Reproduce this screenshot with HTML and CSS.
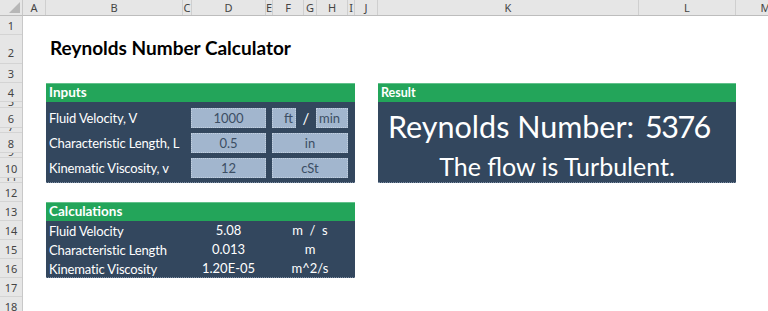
FILE: index.html
```html
<!DOCTYPE html>
<html lang="en">
<head>
  <meta charset="UTF-8">
  <title>Reynolds Number Calculator</title>
  <link rel="stylesheet" href="styles.css">
</head>
<body>
  <div class="sheet">
    <div class="corner"></div>

    <div class="col-heads">
      <div class="ch w-a">A</div>
      <div class="ch w-b">B</div>
      <div class="ch w-c">C</div>
      <div class="ch w-d">D</div>
      <div class="ch w-e">E</div>
      <div class="ch w-f">F</div>
      <div class="ch w-g">G</div>
      <div class="ch w-h">H</div>
      <div class="ch w-i">I</div>
      <div class="ch w-j">J</div>
      <div class="ch w-k">K</div>
      <div class="ch w-l">L</div>
      <div class="ch w-m">M</div>
    </div>

    <div class="row-heads">
      <div class="rh h-19">1</div>
      <div class="rh h-29">2</div>
      <div class="rh h-19">3</div>
      <div class="rh h-19">4</div>
      <div class="rh h-6">5</div>
      <div class="rh h-20">6</div>
      <div class="rh h-5">7</div>
      <div class="rh h-20">8</div>
      <div class="rh h-5">9</div>
      <div class="rh h-20">10</div>
      <div class="rh h-5">11</div>
      <div class="rh h-19">12</div>
      <div class="rh h-19">13</div>
      <div class="rh h-19">14</div>
      <div class="rh h-19">15</div>
      <div class="rh h-19">16</div>
      <div class="rh h-19">17</div>
      <div class="rh h-19">18</div>
    </div>

    <div class="grid-body">
      <div class="title-row">
        <h1>Reynolds Number Calculator</h1>
      </div>

      <div class="panels">
        <section class="panel inputs">
          <div class="panel-head">Inputs</div>
          <div class="input-grid">
            <div class="label">Fluid Velocity, V</div>
            <div class="box">1000</div>
            <div class="unit-split">
              <div class="box box-ft">ft</div>
              <div class="slash">/</div>
              <div class="box box-min">min</div>
            </div>

            <div class="label">Characteristic Length, L</div>
            <div class="box">0.5</div>
            <div class="box">in</div>

            <div class="label">Kinematic Viscosity, v</div>
            <div class="box">12</div>
            <div class="box">cSt</div>
          </div>
        </section>

        <section class="panel result">
          <div class="panel-head small">Result</div>
          <div class="result-body">
            <div class="re-line">
              <span class="re-label">Reynolds Number:</span>
              <span class="re-value">5376</span>
            </div>
            <div class="flow-line">The flow is Turbulent.</div>
          </div>
        </section>
      </div>

      <section class="panel calcs">
        <div class="panel-head">Calculations</div>
        <div class="calc-grid">
          <div class="label">Fluid Velocity</div>
          <div class="val">5.08</div>
          <div class="unit">m&nbsp; /&nbsp; s</div>

          <div class="label">Characteristic Length</div>
          <div class="val">0.013</div>
          <div class="unit">m</div>

          <div class="label">Kinematic Viscosity</div>
          <div class="val">1.20E-05</div>
          <div class="unit">m^2/s</div>
        </div>
      </section>
    </div>
  </div>
</body>
</html>
```

FILE: styles.css
```css
body {
  margin: 0;
  background: #fff;
  font-family: Lato, "Liberation Sans", sans-serif;
  overflow: hidden;
}

.sheet {
  display: grid;
  grid-template-columns: 23px 1fr;
  grid-template-rows: 16px 1fr;
  width: 768px;
  height: 311px;
}

/* headers */
.corner {
  background: #e6e6e6;
  border-right: 1px solid #c8c8c8;
  border-bottom: 1px solid #bdbdbd;
  box-sizing: border-box;
  position: relative;
}

.corner::after {
  content: "";
  position: absolute;
  right: 2px;
  bottom: 2px;
  border-left: 11px solid transparent;
  border-bottom: 11px solid #b7b7b7;
}

.col-heads {
  display: flex;
  background: #e6e6e6;
  border-bottom: 1px solid #bdbdbd;
  box-sizing: border-box;
  overflow: hidden;
}

.ch {
  flex: none;
  box-sizing: border-box;
  border-right: 1px solid #cfcfcf;
  font-family: "Noto Sans", sans-serif;
  font-size: 11px;
  line-height: 15px;
  color: #444;
  text-align: center;
}

.w-a { width: 23px; }
.w-b { width: 137px; }
.w-c { width: 9px; }
.w-d { width: 74px; }
.w-e { width: 7px; }
.w-f { width: 31px; }
.w-g { width: 13px; }
.w-h { width: 31px; }
.w-i { width: 7px; }
.w-j { width: 23px; }
.w-k { width: 261px; }
.w-l { width: 97px; }
.w-m { width: 60px; }

.row-heads {
  background: #e6e6e6;
  border-right: 1px solid #c8c8c8;
  box-sizing: border-box;
  overflow: hidden;
}

.rh {
  display: flex;
  align-items: flex-end;
  justify-content: center;
  box-sizing: border-box;
  border-bottom: 1px solid #d4d4d4;
  overflow: hidden;
  font-family: "Noto Sans", sans-serif;
  font-size: 11px;
  line-height: 16px;
  color: #444;
}

.h-5 { height: 5px; line-height: 11px; }
.h-6 { height: 6px; line-height: 11px; }
.h-19 { height: 19px; }
.h-20 { height: 20px; line-height: 17px; }
.h-29 { height: 29px; line-height: 20px; }

/* sheet content */
.grid-body {
  padding-left: 23px;
}

.title-row {
  height: 67px;
  padding-top: 20px;
  box-sizing: border-box;
}

h1 {
  margin: 0 0 0 4px;
  font-size: 19px;
  line-height: 23px;
  font-weight: bold;
  color: #000;
}

.panels {
  display: flex;
  gap: 23px;
  height: 119px;
}

.panel {
  background: #33475e;
  color: #fff;
  border-bottom: 1px dotted #7d8ea3;
  box-sizing: border-box;
}

.panel-head {
  height: 19px;
  background: #23a55a;
  border-top: 1px solid #62c18b;
  box-sizing: border-box;
  padding-left: 3px;
  font-weight: bold;
  font-size: 13.5px;
  line-height: 17px;
}

.panel-head.small {
  font-size: 12.5px;
}

.inputs {
  width: 309px;
  height: 100px;
}

.input-grid {
  display: grid;
  grid-template-columns: 139px 75px 76px;
  grid-auto-rows: 20px;
  column-gap: 6px;
  row-gap: 5px;
  padding: 6px 7px 5px 0;
}

.label {
  padding-left: 3px;
  font-size: 13px;
  letter-spacing: -0.15px;
  line-height: 20px;
  white-space: nowrap;
}

.box {
  background: #a2b6ce;
  border: 1px dotted #c3d0df;
  box-sizing: border-box;
  color: #3c4e64;
  font-size: 13px;
  line-height: 18px;
  text-align: center;
}

.unit-split {
  display: flex;
}

.box-ft {
  width: 24px;
  text-align: right;
  padding-right: 2px;
}

.slash {
  width: 20px;
  text-align: center;
  font-size: 15px;
  line-height: 20px;
}

.box-min {
  flex: 1;
  text-align: left;
  padding-left: 2px;
}

.result {
  width: 358px;
  height: 100px;
}

.result-body {
  padding: 5px 0 0 10px;
}

.re-line {
  display: flex;
  font-size: 30.5px;
  line-height: 39px;
  white-space: nowrap;
}

.re-label {
  width: 257px;
}

.re-value {
  letter-spacing: -1.5px;
}

.flow-line {
  padding-right: 10px;
  text-align: center;
  font-size: 25px;
  line-height: 41px;
}

.calcs {
  width: 309px;
  height: 76px;
}

.calc-grid {
  display: grid;
  grid-template-columns: 139px 75px 76px;
  grid-auto-rows: 19px;
  column-gap: 6px;
  font-size: 13px;
  line-height: 19px;
}

.val,
.unit {
  text-align: center;
}
```
